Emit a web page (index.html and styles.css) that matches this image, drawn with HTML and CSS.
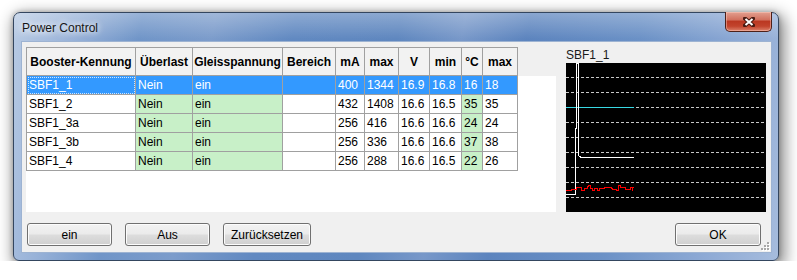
FILE: index.html
```html
<!DOCTYPE html>
<html lang="de">
<head>
  <meta charset="UTF-8">
  <title>Power Control</title>
  <link rel="stylesheet" href="styles.css">
</head>
<body>

  <div class="screen">
    <div class="window">

      <!-- Title bar -->
      <div class="titlebar">
        <span class="title">Power Control</span>
        <button class="close-btn" title="Schließen">
          <svg width="12" height="10" viewBox="0 0 12 10">
            <path d="M2 1.5L10 8.5M10 1.5L2 8.5" stroke="#4a1a12" stroke-width="4" stroke-linecap="square"/>
            <path d="M2.5 2L9.5 8M9.5 2L2.5 8" stroke="#fff" stroke-width="2"/>
          </svg>
        </button>
      </div>

      <!-- Client area -->
      <div class="client">
        <div class="main">

          <div class="grid">
            <table class="booster-table">
              <colgroup>
                <col style="width: 109px">
                <col style="width: 57px">
                <col style="width: 90px">
                <col style="width: 53px">
                <col style="width: 29px">
                <col style="width: 34px">
                <col style="width: 31px">
                <col style="width: 32px">
                <col style="width: 21px">
                <col style="width: 35px">
              </colgroup>
              <thead>
                <tr>
                  <th>Booster-Kennung</th>
                  <th>Überlast</th>
                  <th>Gleisspannung</th>
                  <th>Bereich</th>
                  <th>mA</th>
                  <th>max</th>
                  <th>V</th>
                  <th>min</th>
                  <th>°C</th>
                  <th>max</th>
                </tr>
              </thead>
              <tbody>
                <tr class="selected">
                  <td class="focus">SBF1_1</td>
                  <td>Nein</td>
                  <td>ein</td>
                  <td></td>
                  <td>400</td>
                  <td>1344</td>
                  <td>16.9</td>
                  <td>16.8</td>
                  <td>16</td>
                  <td>18</td>
                </tr>
                <tr>
                  <td>SBF1_2</td>
                  <td class="ok">Nein</td>
                  <td class="ok">ein</td>
                  <td></td>
                  <td>432</td>
                  <td>1408</td>
                  <td>16.6</td>
                  <td>16.5</td>
                  <td class="ok">35</td>
                  <td>35</td>
                </tr>
                <tr>
                  <td>SBF1_3a</td>
                  <td class="ok">Nein</td>
                  <td class="ok">ein</td>
                  <td></td>
                  <td>256</td>
                  <td>416</td>
                  <td>16.6</td>
                  <td>16.6</td>
                  <td class="ok">24</td>
                  <td>24</td>
                </tr>
                <tr>
                  <td>SBF1_3b</td>
                  <td class="ok">Nein</td>
                  <td class="ok">ein</td>
                  <td></td>
                  <td>256</td>
                  <td>336</td>
                  <td>16.6</td>
                  <td>16.6</td>
                  <td class="ok">37</td>
                  <td>38</td>
                </tr>
                <tr>
                  <td>SBF1_4</td>
                  <td class="ok">Nein</td>
                  <td class="ok">ein</td>
                  <td></td>
                  <td>256</td>
                  <td>288</td>
                  <td>16.6</td>
                  <td>16.5</td>
                  <td class="ok">22</td>
                  <td>26</td>
                </tr>
              </tbody>
            </table>
          </div>

          <!-- Scope for the selected booster -->
          <div class="scope">
            <div class="scope-label">SBF1_1</div>
            <svg class="scope-chart" width="200" height="149" viewBox="0 0 200 149">
              <rect width="200" height="149" fill="#000"/>
              <path d="M0 14.5H200M0 29.5H200M0 44.5H200M0 59.5H200M0 74.5H200M0 89.5H200M0 104.5H200M0 119.5H200M0 134.5H200"
                    stroke="#c8c8c8" stroke-dasharray="3 2"/>
              <path d="M0 44.5H68" stroke="#38d8e4"/>
              <path d="M0 131.5H9.5V65.5H10.5V0.5H12.5V92.5L15 94.5H68" stroke="#fff" fill="none"/>
              <polyline fill="none" stroke="#f00" stroke-width="1.2"
                        points="0,127.5 5,127.5 6,126.5 10,126.5 10.5,124.5 15,124.5 16,127.5 18,127.5 18.5,125.5 21,125.5 22.5,122.5 24,122.5 24.5,125.5 26.5,125.5 27,127.5 28.5,127.5 29,125.5 31,125.5 32,127.5 33,127.5 34,125.5 38,125.5 38.5,124.5 45.5,124.5 47,126.5 50.5,126.5 51,127.5 52.5,127.5 53,122.5 54.5,122.5 55,124.5 59,124.5 60,126.5 64,126.5 64.5,124.5 66,124.5 66.5,127.5 67,124.5 68,124.5"/>
            </svg>
          </div>
        </div>

        <div class="actions">
          <button class="btn">ein</button>
          <button class="btn">Aus</button>
          <button class="btn btn-wide">Zurücksetzen</button>
          <button class="btn btn-ok">OK</button>
        </div>

        <!-- Resize grip -->
        <svg class="grip" width="9" height="9" viewBox="0 0 9 9">
          <g fill="#fff">
            <rect x="7" y="1" width="2" height="2"/><rect x="4" y="4" width="2" height="2"/>
            <rect x="7" y="4" width="2" height="2"/><rect x="1" y="7" width="2" height="2"/>
            <rect x="4" y="7" width="2" height="2"/><rect x="7" y="7" width="2" height="2"/>
          </g>
          <g fill="#a8a8a8">
            <rect x="6" y="0" width="2" height="2"/><rect x="3" y="3" width="2" height="2"/>
            <rect x="6" y="3" width="2" height="2"/><rect x="0" y="6" width="2" height="2"/>
            <rect x="3" y="6" width="2" height="2"/><rect x="6" y="6" width="2" height="2"/>
          </g>
        </svg>
      </div>

    </div>
  </div>

</body>
</html>
```

FILE: styles.css
```css
/* Basic Reset */
* {
  margin: 0;
  padding: 0;
  box-sizing: border-box;
}

body {
  background-color: #fff;
  font-family: "Liberation Sans", Arial, sans-serif;
  font-size: 12px;
  color: #000;
}

.screen {
  padding: 12px 0 0 13px;
}

/* Window frame (Aero look) */
.window {
  width: 766px;
  height: 249px;
  display: flex;
  flex-direction: column;
  padding: 0 6px 7px 7px;
  border: 1px solid #34465f;
  border-radius: 7px 7px 6px 6px;
  background:
    linear-gradient(to bottom, rgba(255, 255, 255, 0.28), rgba(255, 255, 255, 0) 26px),
    linear-gradient(100deg, #b9cbe4 0%, #98b2d8 8%, #7095c8 16%, #7c9ccb 25%, #6189c1 35%,
      #5f87bf 48%, #7898c9 56%, #5c84be 64%, #6b91c6 78%, #8eaad5 91%, #a6bcdd 100%);
  box-shadow: 3px 5px 15px 3px rgba(0, 0, 0, 0.45), 0 0 5px rgba(0, 0, 0, 0.25);
}

.titlebar {
  height: 28px;
  display: flex;
  justify-content: space-between;
  align-items: flex-start;
  padding-left: 1px;
}

.title {
  margin-top: 8px;
  font-size: 12px;
  color: #151515;
  text-shadow: 0 0 6px #fff, 0 0 10px rgba(255, 255, 255, 0.8);
}

.close-btn {
  width: 47px;
  height: 20px;
  margin-top: -1px;
  display: flex;
  align-items: center;
  justify-content: center;
  border: 1px solid #4d2019;
  border-top: none;
  border-radius: 0 0 5px 5px;
  background: linear-gradient(to bottom, #e3a090 0%, #d27260 40%, #bb3822 50%, #c2442d 75%, #dc826c 100%);
  box-shadow: inset 0 0 0 1px rgba(255, 210, 200, 0.45);
}

/* Client area */
.client {
  position: relative;
  flex: 1;
  display: flex;
  flex-direction: column;
  gap: 11px;
  padding: 5px 5px 6px 4px;
  background-color: #f0f0f0;
  border: 1px solid #9db3d2;
}

.main {
  display: flex;
  gap: 10px;
  height: 165px;
}

/* Booster grid */
.grid {
  width: 530px;
  height: 165px;
  background: linear-gradient(to bottom, #f0f0f0 29px, #fff 29px);
}

.booster-table {
  width: 492px;
  table-layout: fixed;
  border-collapse: separate;
  border-spacing: 0;
  border-top: 1px solid #a0a0a0;
  border-left: 1px solid #a0a0a0;
  font-size: 12px;
}

.booster-table th,
.booster-table td {
  border-right: 1px solid #a0a0a0;
  border-bottom: 1px solid #a0a0a0;
  white-space: nowrap;
  overflow: hidden;
}

.booster-table th {
  height: 28px;
  background-color: #f2f2f2;
  font-weight: bold;
  font-size: 12px;
  text-align: center;
  vertical-align: middle;
}

.booster-table td {
  height: 19px;
  padding: 0 2px;
  line-height: 18px;
  background-color: #fff;
}

.booster-table td.ok {
  background-color: #c8f0c8;
}

.booster-table tr.selected td {
  background-color: #3399ff;
  color: #fff;
}

.booster-table td.focus {
  outline: 1px dotted #cfe6ff;
  outline-offset: -2px;
}

/* Scope */
.scope {
  width: 200px;
  display: flex;
  flex-direction: column;
}

.scope-label {
  height: 16px;
  line-height: 16px;
  font-size: 12px;
  color: #1a1a1a;
}

.scope-chart {
  display: block;
  shape-rendering: crispEdges;
}

/* Buttons */
.actions {
  display: flex;
  gap: 13px;
  padding-left: 1px;
}

.btn {
  width: 85px;
  height: 23px;
  font-family: "Liberation Sans", Arial, sans-serif;
  font-size: 12px;
  color: #000;
  border: 1px solid #707070;
  border-radius: 3px;
  background: linear-gradient(to bottom, #f2f2f2 0%, #ebebeb 48%, #dddddd 52%, #cfcfcf 100%);
  box-shadow: inset 0 0 0 1px #fcfcfc;
}

.btn-wide {
  width: 88px;
}

.btn-ok {
  width: 86px;
  margin-left: auto;
  margin-right: 5px;
}

.grip {
  position: absolute;
  right: 1px;
  bottom: 1px;
}
```
